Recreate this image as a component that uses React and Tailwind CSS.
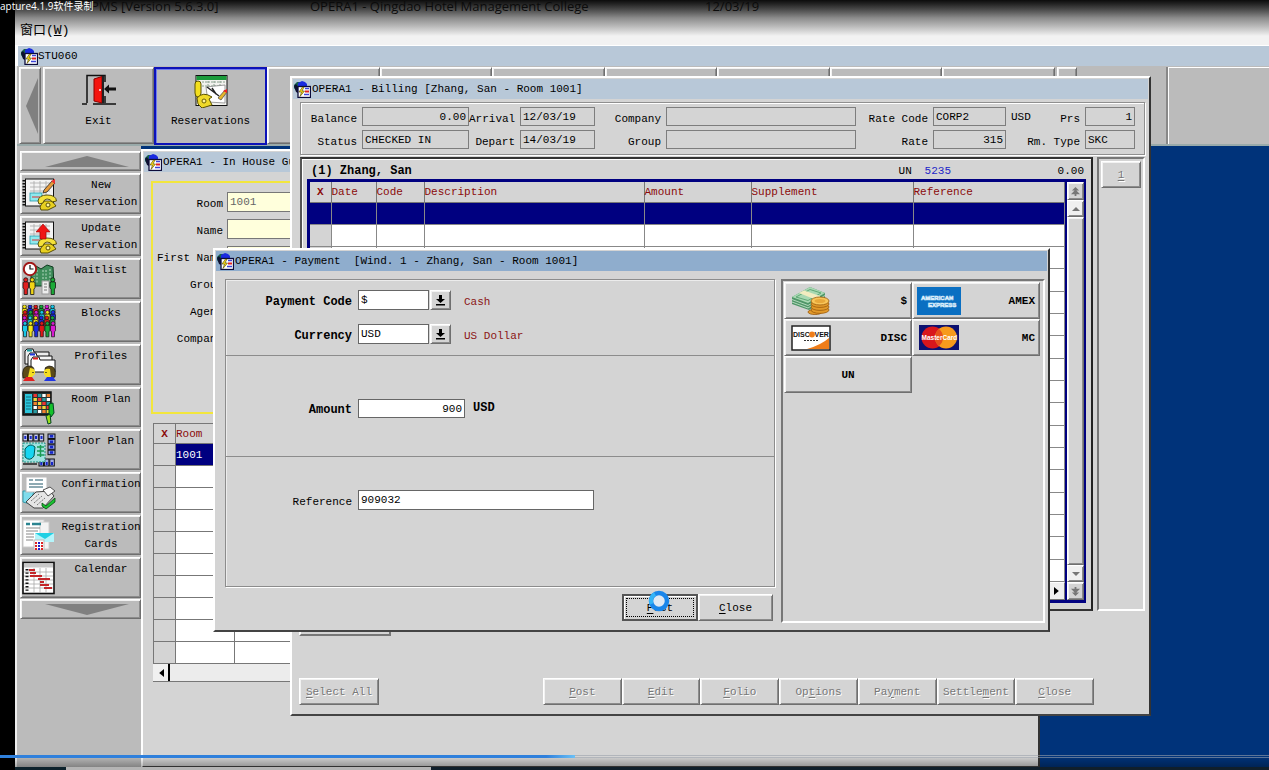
import React from "react";

const MONO = "font-['Liberation_Mono','Noto_Sans_CJK_SC',monospace]";
const RAISED = "border border-t-white border-l-white border-r-[#6f6f6f] border-b-[#6f6f6f] shadow-[inset_1px_1px_0_#f2f2f2,inset_-1px_-1px_0_#8c8c8c]";

function AppIcon() {
  return (
    <svg viewBox="0 0 17 17" className="h-[17px] w-[17px] shrink-0" aria-hidden="true">
      <path d="M0 4 L3 1 L6 1 L6 9 L3 11 L0 7Z" fill="#17604f" />
      <path d="M4 2 L8 0 L11 1 L13 3 L13 6 L4 6Z" fill="#1a2be0" />
      <path d="M0 5 L2 11 L4 12 L4 6 L2 3Z" fill="#0d1030" />
      <rect x="4" y="5.500" width="12.500" height="11" fill="#fff" stroke="#0c0b3a" strokeWidth="1.300" />
      <path d="M8.500 6 L5 11 L7.500 11 L6 15.500 L10.500 10 L8 10 L10 6Z" fill="#ffe11a" stroke="#443c00" strokeWidth=".6" />
      <path d="M11 7.500h4M10 13.500h5" stroke="#3d43d8" strokeWidth="1.600" />
      <path d="M11 10.500h4" stroke="#e02323" strokeWidth="2" />
    </svg>
  );
}

function Phone() {
  return (
    <g stroke="#4b4200" strokeWidth=".9">
      <path d="M18 30 L21 24 L30 24 L34 29 L26 33 L19 33Z" fill="#e8d020" />
      <path d="M16 24 Q17 18 25 18 Q34 18 34.500 24 L30 25 Q29 22 25 22 Q22 22 21 26 L17 27Z" fill="#f4e13a" />
      <circle cx="26" cy="28" r="2" fill="#fff6a0" />
    </g>
  );
}

function Notebook({ children }) {
  return (
    <>
      <rect x="3.500" y="2" width="28" height="27" fill="#f4f4f4" stroke="#111" />
      <path d="M2 3v26" stroke="#111" strokeWidth="3" strokeDasharray="1.500 1.500" />
      <path d="M8 6h20M8 10h20M8 14h20M12 4v14M18 4v14M24 4v14" stroke="#aaa" strokeWidth=".8" />
      <rect x="8" y="16" width="12" height="8" fill="#8fe9ee" stroke="#29a" strokeWidth=".8" />
      <path d="M10 20h8" stroke="#d33" />
      <Phone />
      {children}
    </>
  );
}

function Person({ x, y, c, s = 1 }) {
  return (
    <g transform={`translate(${x} ${y}) scale(${s})`} fill={c} stroke="#111" strokeWidth=".7">
      <path d="M0 4 Q2.500 2 5 4 L5 9 L4 10 L4 15 L1 15 L1 10 L0 9Z" />
      <circle cx="2.500" cy="1.700" r="1.900" />
    </g>
  );
}

const CROWD = ["#19c8e8", "#f2e418", "#1a2ae0", "#e01818", "#17a53a", "#d61bd0"];

const ICONS = {
  new: (
    <Notebook>
      <path d="M22 13 L30 4 L33 6 L25 15 L21 16Z" fill="#e59a3a" stroke="#222" strokeWidth=".8" />
      <path d="M29 4 L33 2 L33 7Z" fill="#e33" />
    </Notebook>
  ),
  update: (
    <Notebook>
      <path d="M21 4 L28 12 L24 12 L24 19 L18 19 L18 12 L14 12Z" fill="#f01414" stroke="#900" strokeWidth=".6" />
    </Notebook>
  ),
  waitlist: (
    <>
      <path d="M9 8 L14 4 L19 7 L25 3 L31 5 L32 24 L9 24Z" fill="#3f8d5b" stroke="#0d3a1e" />
      <path d="M12 8v14M15 8v14M21 8v14M24 8v14M28 7v14" stroke="#b9dbc4" strokeDasharray="2 1.500" />
      <circle cx="8" cy="7" r="6.200" fill="#fff" stroke="#a01616" strokeWidth="2" />
      <path d="M8 3v4h3.500" stroke="#111" fill="none" strokeWidth="1.200" />
      <Person x={1} y={16} c="#e01f1f" s={1.1} />
      <Person x={7.5} y={16} c="#f0d516" s={1.1} />
      <rect x="20" y="19" width="7" height="13" fill="#eee" stroke="#999" />
      <path d="M22 22h3M22 25h3M22 28h3" stroke="#777" />
      <Person x={28} y={16} c="#1cab38" s={1.1} />
    </>
  ),
  blocks: (
    <>
      {[0, 1, 2, 3].map((r) =>
        CROWD.map((_, i) => (
          <Person key={`${r}-${i}`} x={i * 5.6 + (r % 2 ? 0.5 : 0)} y={r * 5.6} c={CROWD[(i + r * 2 + (r === 3 ? 0 : 1)) % 6]} />
        ))
      )}
    </>
  ),
  profiles: (
    <>
      <path d="M3 3 L5 1 L11 1 L12 4 L27 4 L27 16 L3 16Z" fill="#eee" stroke="#111" />
      <path d="M6 8 L8 5 L14 5 L15 8 L30 8 L30 20 L6 20Z" fill="#f6f6f6" stroke="#111" />
      <path d="M9 12 L11 9 L17 9 L18 12 L33 12 L33 24 L9 24Z" fill="#fff" stroke="#111" />
      <path d="M5 2.500h5" stroke="#179ba0" strokeWidth="2" />
      <path d="M8 6.500h5" stroke="#2338e0" strokeWidth="2" />
      <path d="M11 10.500h5" stroke="#e02020" strokeWidth="2" />
      <path d="M1 30 Q-1 18 7 18 Q12 18 12 22 L8 30Z" fill="#5b4a18" stroke="#111" strokeWidth=".7" />
      <path d="M8 20 Q14 20 13 26 L10 29 L6 29Z" fill="#f6de22" />
      <path d="M33 29 Q35 18 27 18 Q22 19 23 22 L28 30Z" fill="#5b4a18" stroke="#111" strokeWidth=".7" />
      <path d="M28 21 Q21 20 22 26 L24 29 L29 29Z" fill="#f6de22" />
      <path d="M11 24v1M24 24v1" stroke="#111" strokeWidth="1.200" />
      <path d="M1 33 L13 33 L10 29 L4 29Z" fill="#e12121" />
      <path d="M22 33 L34 33 L31 29 L25 29Z" fill="#2136e2" />
    </>
  ),
  roomplan: (
    <>
      <rect x="1" y="1" width="28" height="23" fill="#233" stroke="#111" strokeWidth="1.500" />
      <rect x="3" y="3" width="7" height="19" fill="#2cc6dc" />
      <path d="M4 6h5M4 9h5M4 12h5M4 15h5M4 18h5" stroke="#156" strokeWidth=".8" />
      {[0, 1, 2, 3, 4].map((r) =>
        [0, 1, 2, 3].map((c) => (
          <rect key={`${r}-${c}`} x={11.5 + c * 4.4} y={3 + r * 4} width="3.400" height="3" fill={["#e33", "#fff", "#f0d93a", "#2a9aa0", "#f08030"][(r * 2 + c * 3) % 5]} />
        ))
      )}
      <path d="M27 13 L31 12 L32 22 L29 26 L27 24Z" fill="#14c22c" stroke="#042" />
      <path d="M24 25 L28 23 L29 32 L26 33Z" fill="#9be01c" stroke="#042" />
    </>
  ),
  floorplan: (
    <>
      {[0, 1, 2, 3].map((i) => <rect key={i} x={1 + i * 5.4} y="1" width="4.500" height="7" fill="#c5cbea" stroke="#111" />)}
      {[0, 1, 2, 3].map((i) => <rect key={i} x="26" y={1 + i * 5.4} width="7" height="4.500" fill="#8d9be6" stroke="#111" />)}
      {[0, 1, 2].map((i) => <rect key={i} x={17 + i * 5.4} y="26" width="4.500" height="7" fill="#a5aeea" stroke="#111" />)}
      <path d="M3.300 3v3M8.700 3v3M14 3v3M19.500 3v3" stroke="#1626c8" strokeWidth="2" />
      <path d="M29.500 2v20" stroke="#1626c8" strokeWidth="3" strokeDasharray="2.500 2.900" />
      <path d="M19.300 29v3M24.700 29v3M30 29v3" stroke="#1626c8" strokeWidth="2" />
      <rect x="1" y="10" width="22" height="19" fill="#9fe2e0" stroke="#1f8f80" strokeDasharray="2 1" />
      <path d="M3 16 Q8 9 13 14 L12 23 Q8 29 3 24Z" fill="#18d5f0" stroke="#055" />
      <path d="M15 14h7M15 18h7M15 22h7M18.500 12v12" stroke="#1a9a55" strokeWidth="1.500" />
      <path d="M1 31h14" stroke="#222" strokeWidth="1.500" />
    </>
  ),
  confirmation: (
    <>
      <path d="M1 15 L12 15 L8 28 L1 26Z" fill="#7fdcec" stroke="#39a" />
      <rect x="4" y="1" width="21" height="15" fill="#fff" stroke="#bbb" />
      <path d="M7 4h4M13 4h8M7 8h14M7 11h14" stroke="#6a8f9a" strokeWidth="1.400" />
      <path d="M4 26 L14 16 L28 15 L32 20 L21 32 L12 32Z" fill="#e6e6e6" stroke="#444" />
      <path d="M21 14 L28 11 L33 15 L26 20Z" fill="#fafafa" stroke="#555" />
      <path d="M9 25l8-7M12 27l8-7M15 29l8-7" stroke="#777" strokeDasharray="2 1" />
      <path d="M20 27 L24 30 L33 22 L33 26 L24 33 L20 30Z" fill="#19c431" stroke="#064d10" strokeWidth=".8" />
    </>
  ),
  registration: (
    <>
      <rect x="1" y="1" width="21" height="27" fill="#fff" stroke="#ccc" />
      <rect x="18" y="3" width="9" height="27" fill="#f3f3f3" stroke="#ccc" />
      <path d="M4 5h4M10 5h9" stroke="#2b8490" strokeWidth="2.400" />
      <path d="M4 9h14M4 12h12M4 15h8M4 18h8M4 21h7" stroke="#888" strokeWidth="1.200" />
      <path d="M13 14 L32 14 L32 23 L13 23Z" fill="#b5f4fa" />
      <path d="M13 14 L32 14 L23 20Z" fill="#1fd0e4" />
      <rect x="12" y="21" width="10" height="10" fill="#fff" stroke="#bbb" />
      <path d="M14 23v8M20 23v8" stroke="#d22" strokeWidth="2" strokeDasharray="2 1" />
      <path d="M17 23v8" stroke="#22c" strokeWidth="2" strokeDasharray="2 1" />
    </>
  ),
  calendar: (
    <>
      <rect x="1" y="1.500" width="31" height="31" fill="#fff" stroke="#111" strokeWidth="1.600" />
      <rect x="2" y="2.500" width="29" height="4" fill="#c9c9c9" />
      <path d="M2 11h29M2 15h29M2 19h29M2 23h29M2 27h29M12 7v25M18 7v25M24 7v25" stroke="#aaa" strokeWidth=".8" />
      <path d="M5 8v22" stroke="#111" strokeWidth="3" strokeDasharray="1.400 2" />
      <path d="M7 9h6M8 12h6M8 15h12M16 18h12M18 21h4M18 24h9M22 27h8" stroke="#c3262a" strokeWidth="2" />
    </>
  ),
};

const NAV = [
  ["new", "New", "Reservation"],
  ["update", "Update", "Reservation"],
  ["waitlist", "Waitlist"],
  ["blocks", "Blocks"],
  ["profiles", "Profiles"],
  ["roomplan", "Room Plan"],
  ["floorplan", "Floor Plan"],
  ["confirmation", "Confirmation"],
  ["registration", "Registration", "Cards"],
  ["calendar", "Calendar"],
];

function ExitIcon() {
  return (
    <svg viewBox="0 0 34 32" className="h-8 w-[34px]" aria-hidden="true">
      <path d="M5 29 V1.500 H23 V8 M23 22 V29" fill="none" stroke="#111" strokeWidth="1.500" />
      <path d="M0 30h5M11 30h23" stroke="#111" strokeWidth="1.500" />
      <path d="M12 5 L20 2.500 L20 29 L12 27Z" fill="#f4150f" stroke="#8a0000" />
      <path d="M20 2h2v27h-2z" fill="#222" />
      <circle cx="18" cy="16" r="1" fill="#fff" />
      <path d="M22 15 L27 10.500 L27 13.500 L34 13.500 L34 16.500 L27 16.500 L27 19.500Z" fill="#111" />
    </svg>
  );
}

function ReservationsIcon() {
  return (
    <svg viewBox="0 0 34 34" className="h-[34px] w-[34px]" aria-hidden="true">
      <rect x="2" y="1.500" width="31" height="30" fill="#f2f2ee" stroke="#111" />
      <rect x="2.500" y="2" width="30" height="4" fill="#1b9a3b" />
      <path d="M8 8h24M8 12h24M8 24h24M14 7v6M20 7v6M26 7v6" stroke="#8aa08e" strokeDasharray="2 1" />
      <path d="M12 13 L31 11 L31 29 L14 28Z" fill="#fff" stroke="#777" strokeWidth=".7" />
      <path d="M13 13 L25 22 M18 14 L22 20" fill="none" stroke="#222" strokeWidth="1.400" />
      <path d="M1 10 Q1 7 4 7 Q7 7 7 10 L7 19 Q7 23 4 23 Q1 23 1 19Z" fill="#f4df1e" stroke="#5b5200" />
      <path d="M3 24 Q9 17 18 23 L15 25 L18 31 L8 34 L4 30Z" fill="#efd92a" stroke="#5b5200" />
      <circle cx="10" cy="27" r="2" fill="#fff49a" stroke="#6d6000" />
      <path d="M24 24 L31 16 L33 18 L27 26Z" fill="#e6b62b" stroke="#444" strokeWidth=".7" />
      <path d="M29 17 L33 15 L33 19Z" fill="#e22" />
    </svg>
  );
}

function Arrow({ d, className, viewBox = "0 0 10 10" }) {
  return (
    <svg viewBox={viewBox} className={className} fill="currentColor" preserveAspectRatio="none" aria-hidden="true">
      <path d={d} />
    </svg>
  );
}

function Mnemonic({ text, at = 0 }) {
  return (
    <span className="whitespace-pre">
      {text.slice(0, at)}
      <u className="underline underline-offset-2">{text[at]}</u>
      {text.slice(at + 1)}
    </span>
  );
}

function WinButton({ text, at, disabled, className = "" }) {
  return (
    <button
      type="button"
      disabled={disabled}
      className={`flex h-[27px] items-center justify-center bg-[#d4d4d4] text-[11px] ${RAISED} ${disabled ? "text-[#777] [text-shadow:1px_1px_0_#fff]" : "text-black"} ${className}`}
    >
      <Mnemonic text={text} at={at} />
    </button>
  );
}

function Window({ title, active, className, children }) {
  return (
    <section
      aria-label={title}
      className={`absolute flex flex-col overflow-hidden border-2 border-t-white border-l-white border-r-[#333] border-b-[#444] bg-[#d4d4d4] ${className}`}
    >
      <header className={`mx-px mt-px flex h-5 shrink-0 items-center gap-px px-px ${active ? "bg-[#8fadcd]" : "bg-[#b8c8d8]"}`}>
        <AppIcon />
        <h2 className="whitespace-pre text-[11px]">{title}</h2>
      </header>
      {children}
    </section>
  );
}

function Field({ id, label, value, labelClass, inputClass }) {
  return (
    <div className="flex h-[19px] items-center">
      <label htmlFor={id} className={`shrink-0 pt-1 pr-[5px] text-right whitespace-pre ${labelClass}`}>{label}</label>
      <input id={id} readOnly defaultValue={value} className={`h-[19px] shrink-0 border border-[#7d7d7d] bg-[#d4d4d4] px-[2px] outline-none ${inputClass}`} />
    </div>
  );
}

function InHouseWindow() {
  const fields = [["Room", "1001"], ["Name", ""], ["First Name", ""], ["Group", ""], ["Agent", ""], ["Company", ""]];
  return (
    <Window title="OPERA1 - In House Gu" className="top-[149px] bottom-[2px] left-[141px] w-[899px]">
      <div className="mx-2 mt-[9px] h-[233px] shrink-0 border-2 border-[#f2e63c] pt-[9px]">
        {fields.map(([label, value]) => (
          <div key={label} className="flex h-[27px] items-start">
            <label htmlFor={`guest-${label}`} className="w-[70px] shrink-0 pt-[5px] text-right whitespace-pre">{label}</label>
            <input id={`guest-${label}`} readOnly defaultValue={value} className="ml-1 h-5 w-48 border border-[#777] bg-[#ffffdc] px-[2px] text-[#666] outline-none" />
          </div>
        ))}
      </div>
      <div className="px-[10px] pt-[9px]">
        <table className="w-full table-fixed border-collapse bg-white">
          <colgroup><col className="w-[22px]" /><col className="w-[59px]" /><col /></colgroup>
          <thead>
            <tr className="h-5 bg-[#d4d4d4] text-left text-[#8b0a0a]">
              <th className="border border-[#777] p-0 text-center font-bold">X</th>
              <th className="border border-r-0 border-[#777] p-0 font-normal">Room</th>
              <th className="border border-l-0 border-[#777] p-0"></th>
            </tr>
          </thead>
          <tbody>
            {Array.from({ length: 10 }, (_, i) => (
              <tr key={i} className="h-[22px]">
                <td className="border border-[#777] bg-[#d4d4d4] p-0"></td>
                <td className={`border border-[#777] p-0 ${i === 0 ? "bg-[#000080] text-white" : ""}`}>{i === 0 ? "1001" : ""}</td>
                <td className="border border-[#777] p-0"></td>
              </tr>
            ))}
          </tbody>
        </table>
      </div>
      <div className="mx-[10px] flex h-[18px] shrink-0 border-b border-[#777] bg-[#ececec]">
        <button type="button" aria-label="Scroll left" className="flex w-[17px] items-center justify-center border-r-2 border-black bg-[#f0f0f0]">
          <Arrow d="M10 0 L2 5 L10 10Z" className="h-2 w-[6px]" />
        </button>
      </div>
    </Window>
  );
}

const LEDGER = ["Date", "Code", "Description", "Amount", "Supplement", "Reference"];
const ACTIONS = [["Post", 0], ["Edit", 0], ["Folio", 0], ["Options", 2], ["Payment", 2], ["Settlement", 6], ["Close", 0]];

function BillingWindow() {
  return (
    <Window title="OPERA1 - Billing [Zhang, San - Room 1001]" className="top-[76px] left-[290px] h-[640px] w-[861px]">
      <div className="mr-1 ml-2 mt-[3px] flex h-[53px] shrink-0 flex-col gap-1 border border-[#8f8f8f] pt-[4px] pr-[9px] pl-px shadow-[inset_1px_1px_0_#fff,1px_1px_0_#fff]">
        <div className="flex items-center">
          <Field id="balance" label="Balance" value="0.00" labelClass="w-[60px]" inputClass="w-[107px] text-right" />
          <Field id="arrival" label="Arrival" value="12/03/19" labelClass="w-[51px]" inputClass="w-[75px]" />
          <Field id="company" label="Company" value="" labelClass="w-[71px]" inputClass="w-[190px]" />
          <Field id="rate-code" label="Rate Code" value="CORP2" labelClass="w-[77px]" inputClass="w-[73px]" />
          <span className="pl-[5px]">USD</span>
          <div className="flex-1" />
          <Field id="prs" label="Prs" value="1" labelClass="w-[30px]" inputClass="w-[50px] text-right" />
        </div>
        <div className="flex items-center">
          <Field id="status" label="Status" value="CHECKED IN" labelClass="w-[60px]" inputClass="w-[107px]" />
          <Field id="depart" label="Depart" value="14/03/19" labelClass="w-[51px]" inputClass="w-[75px]" />
          <Field id="group" label="Group" value="" labelClass="w-[71px]" inputClass="w-[190px]" />
          <Field id="rate" label="Rate" value="315" labelClass="w-[77px]" inputClass="w-[73px] text-right" />
          <div className="flex-1" />
          <Field id="rm-type" label="Rm. Type" value="SKC" labelClass="w-[60px]" inputClass="w-[50px]" />
        </div>
      </div>

      <div className="mr-1 ml-2 mt-[2px] flex h-[454px] shrink-0 gap-1">
        <div className="flex min-w-0 flex-1 flex-col border-2 border-t-[#333] border-r-[#222] border-b-[#333] border-l-[#555] px-[5px] pb-[6px] shadow-[inset_1px_1px_0_#fff]">
          <div className="flex h-5 shrink-0 items-center pt-1 pr-[2px] pl-1">
            <h3 className="flex-1 text-[12px] font-bold whitespace-pre">(1) Zhang, San</h3>
            <span className="w-[26px]">UN</span>
            <span className="w-[133px] text-[#1e26c8]">5235</span>
            <span>0.00</span>
          </div>
          <div className="flex min-h-0 flex-1 border-[3px] border-r-2 border-[#000080]">
            <div className="flex min-w-0 flex-1 flex-col">
              <table className="h-[400px] w-full table-fixed border-collapse bg-white">
                <colgroup>
                  <col className="w-[21px]" /><col className="w-[45px]" /><col className="w-[48px]" /><col className="w-[220px]" /><col className="w-[107px]" /><col className="w-[162px]" /><col />
                </colgroup>
                <thead>
                  <tr className="h-5 bg-[#d4d4d4] text-left text-[#8b0a0a]">
                    <th className="border-r border-b border-[#777] p-0 text-center font-bold">X</th>
                    {LEDGER.map((h) => <th key={h} className="border-r border-b border-[#777] p-0 font-normal">{h}</th>)}
                  </tr>
                </thead>
                <tbody>
                  {Array.from({ length: 17 }, (_, i) => (
                    <tr key={i} className={i === 0 ? "bg-[#000080]" : ""}>
                      <td className={`border-r border-b border-[#888] p-0 ${i === 0 ? "" : "bg-[#d4d4d4]"}`}></td>
                      {LEDGER.map((h) => <td key={h} className="border-r border-b border-[#888] p-0"></td>)}
                    </tr>
                  ))}
                </tbody>
              </table>
              <div className="flex flex-1 justify-end bg-[#ececec]">
                <button type="button" aria-label="Scroll right" className="flex w-4 items-center justify-center border border-white border-r-[#777] border-b-[#777] bg-[#f0f0f0]">
                  <Arrow d="M0 0 L8 5 L0 10Z" className="h-2 w-[6px]" />
                </button>
              </div>
            </div>
            <div className="flex w-[19px] shrink-0 flex-col border-l-2 border-[#000080] text-[#777]">
              <button type="button" aria-label="First page" className={`flex h-[18px] items-center justify-center bg-[#d4d4d4] ${RAISED}`}>
                <Arrow d="M5 0 L9 4 L6 4 L10 8 L6 8 L6 10 L4 10 L4 8 L0 8 L4 4 L1 4Z" className="h-[9px] w-[9px]" />
              </button>
              <button type="button" aria-label="Scroll up" className={`flex h-[17px] items-center justify-center bg-[#f0f0f0] ${RAISED}`}>
                <Arrow d="M5 0 L10 10 L0 10Z" className="h-1 w-2" />
              </button>
              <div className={`flex-1 bg-[#d4d4d4] ${RAISED}`} />
              <button type="button" aria-label="Scroll down" className={`flex h-[17px] items-center justify-center bg-[#f0f0f0] ${RAISED}`}>
                <Arrow d="M0 0 L10 0 L5 10Z" className="h-1 w-2" />
              </button>
              <button type="button" aria-label="Last page" className={`flex h-[18px] items-center justify-center bg-[#d4d4d4] ${RAISED}`}>
                <Arrow d="M5 10 L9 6 L6 6 L10 2 L6 2 L6 0 L4 0 L4 2 L0 2 L4 6 L1 6Z" className="h-[9px] w-[9px]" />
              </button>
            </div>
          </div>
        </div>
        <div className="w-12 shrink-0 border-2 border-t-[#777] border-r-white border-b-white border-l-[#777] p-[2px]">
          <WinButton text="1" at={0} disabled className="w-full" />
        </div>
      </div>

      <div className="mx-[7px] h-[25px] w-[92px] shrink-0 border-2 border-t-white border-r-[#777] border-b-[#777] border-l-white" />
      <div className="mx-[7px] mt-auto mb-[9px] flex justify-between pr-[48px]">
        <WinButton text="Select All" at={0} disabled className="w-20" />
        <div className="grid w-[551px] grid-cols-7">
          {ACTIONS.map(([t, at]) => <WinButton key={t} text={t} at={at} disabled />)}
        </div>
      </div>
    </Window>
  );
}

function CashIcon() {
  return (
    <svg viewBox="0 0 38 28" className="h-7 w-[38px]" aria-hidden="true">
      <path d="M0 10 L18 0 L33 6 L33 13 L17 23 L0 17Z" fill="#4f9668" />
      <path d="M0 10 L18 0 L33 6 L16 16Z" fill="#a8d8b2" />
      <path d="M4 10 L18 2.500 L29 6 L16 13.500Z" fill="none" stroke="#5fa876" />
      <path d="M0 12.500 L16 18.500 L33 8.500M0 15 L16 21 L30 12" fill="none" stroke="#cbe9d0" strokeWidth=".8" />
      <path d="M7 6 L12 3.500 L28 9 L28 16 L22 19 L22 12Z" fill="#f2ecc0" />
      <g fill="#e29a2a" stroke="#9a5a0c" strokeWidth=".8">
        <ellipse cx="23" cy="25" rx="7" ry="2.600" />
        <ellipse cx="28" cy="23" rx="9" ry="3.400" />
        <ellipse cx="28" cy="20" rx="9" ry="3.400" />
        <ellipse cx="28" cy="17" rx="9" ry="3.400" />
        <ellipse cx="28" cy="14" rx="9" ry="4" fill="#f8c65a" />
      </g>
      <ellipse cx="28" cy="14" rx="5.500" ry="2" fill="#e8a83a" />
    </svg>
  );
}

function AmexIcon() {
  return (
    <svg viewBox="0 0 44 28" className="h-7 w-11" aria-hidden="true">
      <rect width="44" height="28" fill="#0a6fc2" />
      <g fill="#0a6fc2" stroke="#d8ecfa" strokeWidth=".7" fontFamily="Liberation Sans, sans-serif" fontWeight="bold" fontSize="6">
        <text x="4" y="13">AMERICAN</text>
        <text x="11" y="20">EXPRESS</text>
      </g>
    </svg>
  );
}

function DiscoverIcon() {
  return (
    <svg viewBox="0 0 40 26" className="h-[26px] w-10" aria-hidden="true">
      <rect x="1" y="1" width="38" height="24" fill="#fff" stroke="#222" strokeWidth="1.500" />
      <path d="M38 13 Q30 20 16 24 L38 24Z" fill="#ee7d1a" />
      <g fill="#111" fontFamily="Liberation Sans, sans-serif" fontWeight="bold" fontSize="7">
        <text x="2" y="12">DISC</text>
        <text x="23.500" y="12">VER</text>
      </g>
      <circle cx="21" cy="9.500" r="2.900" fill="#ee7d1a" />
      <path d="M13 15.500h14" stroke="#333" strokeWidth="1.200" strokeDasharray="2 1" />
    </svg>
  );
}

function MastercardIcon() {
  return (
    <svg viewBox="0 0 40 25" className="h-[25px] w-10" aria-hidden="true">
      <rect width="40" height="25" fill="#0d1170" />
      <circle cx="13.500" cy="12.500" r="11" fill="#d8161c" />
      <circle cx="27" cy="12.500" r="11" fill="#f79a1c" />
      <path d="M20 4 A11 11 0 0 0 20 21 A11 11 0 0 0 20 4" fill="#e5501c" />
      <text x="2.500" y="15" fill="#fff" fontFamily="Liberation Sans, sans-serif" fontWeight="bold" fontSize="6.500">MasterCard</text>
    </svg>
  );
}

const METHODS = [["$", CashIcon], ["AMEX", AmexIcon], ["DISC", DiscoverIcon], ["MC", MastercardIcon], ["UN", null]];

function Lookup({ id, label, value, note }) {
  return (
    <div className="flex h-5 items-center">
      <label htmlFor={id} className="w-[126px] pt-1 text-right text-[12px] font-bold whitespace-pre">{label}</label>
      <input id={id} defaultValue={value} className="ml-[6px] h-5 w-[71px] border border-[#666] bg-white px-[2px] outline-none" />
      <button type="button" aria-label={`${label} list`} className={`ml-px flex h-5 w-[21px] items-center justify-center bg-[#d4d4d4] ${RAISED}`}>
        <Arrow d="M3 0 H6 V4 H9 L4.500 8 L0 4 H3Z M0 9 H9 V10.500 H0Z" viewBox="0 0 9 11" className="h-[11px] w-[9px]" />
      </button>
      <span className="ml-[13px] pt-1 text-[#8b1414]">{note}</span>
    </div>
  );
}

function PaymentWindow() {
  return (
    <Window active title="OPERA1 - Payment  [Wind. 1 - Zhang, San - Room 1001]" className="top-[248px] left-[213px] h-[384px] w-[837px]">
      <div className="flex min-h-0 flex-1 gap-[6px] px-[3px] pt-2 pb-[7px]">
        <div className="flex flex-1 flex-col pl-[7px]">
          <div className="flex h-[308px] shrink-0 flex-col border border-[#8c8c8c] shadow-[1px_1px_0_#fff,inset_1px_1px_0_#ececec]">
            <div className="flex h-[76px] flex-col gap-[14px] border-b border-[#8c8c8c] pt-[10px]">
              <Lookup id="pay-code" label="Payment Code" value="$" note="Cash" />
              <Lookup id="pay-currency" label="Currency" value="USD" note="US Dollar" />
            </div>
            <div className="flex h-[101px] items-start border-b border-[#8c8c8c] pt-[43px]">
              <label htmlFor="pay-amount" className="w-[126px] pt-1 text-right text-[12px] font-bold">Amount</label>
              <input id="pay-amount" defaultValue="900" className="ml-[6px] h-[19px] w-[107px] border border-[#666] bg-white px-[2px] text-right outline-none" />
              <span className="ml-2 text-[12px] leading-[19px] font-bold">USD</span>
            </div>
            <div className="flex items-start pt-[33px]">
              <label htmlFor="pay-ref" className="w-[126px] pt-[5px] text-right">Reference</label>
              <input id="pay-ref" defaultValue="909032" className="ml-[6px] h-5 w-[236px] border border-[#666] bg-white px-[2px] outline-none" />
            </div>
          </div>
          <div className="mt-[7px] flex justify-end pr-[2px]">
            <div className="relative">
              <button type="button" className="h-[27px] w-[76px] border-2 border-[#555] bg-[#d4d4d4] p-[2px] text-[11px] shadow-[inset_1px_1px_0_#fff]">
                <span className="flex h-full items-center justify-center border border-dotted border-black"><Mnemonic text="Post" at={0} /></span>
              </button>
              <svg viewBox="0 0 22 22" className="pointer-events-none absolute -top-1 left-[26px] h-[22px] w-[22px]" aria-hidden="true">
                <circle cx="11" cy="11" r="8" fill="#dfe8f2" stroke="#1a86ea" strokeWidth="4.500" />
                <path d="M3.500 14 A8 8 0 0 1 7 4" fill="none" stroke="#35b4f7" strokeWidth="4" />
              </svg>
            </div>
            <WinButton text="Close" at={0} className="w-[75px]" />
          </div>
        </div>
        <div className="grid w-[264px] shrink-0 auto-rows-[37px] grid-cols-2 content-start border-2 border-t-[#777] border-r-white border-b-white border-l-[#777] py-px pr-[3px] pl-px">
          {METHODS.map(([name, Icon]) => (
            <button key={name} type="button" className={`flex items-center bg-[#d4d4d4] px-1 text-[11px] font-bold ${RAISED} ${Icon ? "justify-between" : "justify-center"}`}>
              {Icon && <span className="flex w-[44px] justify-center"><Icon /></span>}
              <span>{name}</span>
            </button>
          ))}
        </div>
      </div>
    </Window>
  );
}

function TopToolbar() {
  return (
    <nav aria-label="Modules" className="flex h-20 shrink-0 border-b-2 border-[#9aa] bg-[#bbb] pt-px pl-[2px]">
      <button type="button" aria-label="Previous modules" className={`mr-[2px] flex h-[77px] w-[22px] shrink-0 items-center justify-end pr-[2px] text-[#808080] ${RAISED}`}>
        <Arrow d="M10 0 L0 5 L10 10Z" className="h-[56px] w-[12px]" />
      </button>
      <button type="button" className={`flex h-[77px] w-[111px] shrink-0 flex-col items-center pt-[6px] ${RAISED}`}>
        <ExitIcon />
        <span className="mt-2 text-[11px]">Exit</span>
      </button>
      <button type="button" className="flex h-[78px] w-[113px] shrink-0 flex-col items-center border-2 border-[#0c12b8] pt-[5px] shadow-[inset_1px_1px_0_#6f7cf0]">
        <ReservationsIcon />
        <span className="mt-[6px] text-[11px]">Reservations</span>
      </button>
      <div className="grid w-[788px] shrink-0 grid-cols-7">
        {[1, 2, 3, 4, 5, 6, 7].map((n) => <span key={n} className={`h-[77px] ${RAISED}`} />)}
      </div>
      <span className={`ml-[2px] h-[77px] w-5 shrink-0 ${RAISED}`} />
      <span className="h-[77px] w-[91px] shrink-0 border-r-2 border-r-[#888]" />
      <span className="h-[77px] flex-1 border-t border-l border-white" />
    </nav>
  );
}

function Sidebar() {
  return (
    <nav aria-label="Reservations" className="w-[124px] shrink-0 overflow-hidden bg-[#bbb] pt-[5px] pl-[3px]">
      <button type="button" aria-label="Scroll menu up" className={`flex h-5 w-full items-center justify-center pl-3 text-[#808080] ${RAISED}`}>
        <Arrow d="M5 0 L10 10 L0 10Z" className="h-[11px] w-[84px]" />
      </button>
      <div className="mt-[2px] grid h-[425px] grid-rows-10 gap-[2px]">
        {NAV.map(([icon, ...lines]) => (
          <button key={icon} type="button" className={`flex items-start overflow-hidden ${RAISED}`}>
            <svg viewBox="0 0 35 34" className="mt-[3px] ml-px h-[34px] w-[35px] shrink-0" aria-hidden="true">{ICONS[icon]}</svg>
            <span className="flex w-[88px] shrink-0 flex-col items-center pt-[3px] text-[11px] leading-[17px]">
              {lines.map((l) => <span key={l} className="whitespace-nowrap">{l}</span>)}
            </span>
          </button>
        ))}
      </div>
      <button type="button" aria-label="Scroll menu down" className={`mt-px flex h-5 w-full items-center justify-center pl-3 text-[#808080] ${RAISED}`}>
        <Arrow d="M0 0 L10 0 L5 10Z" className="h-[11px] w-[84px]" />
      </button>
    </nav>
  );
}

export default function App() {
  const played = 45.3;
  return (
    <div className={`relative flex h-screen overflow-hidden bg-black pl-[15px] text-[11px] leading-[14px] text-black ${MONO}`}>
      <div className="flex min-w-0 flex-1 flex-col bg-[#00337a]">
        <header className="h-[45px] shrink-0 bg-linear-to-b from-[#0c0c0c] via-[#8c8c8c] via-40% to-[#f2f2f2] to-80%">
          <div className="flex h-3 items-center font-['Open_Sans',sans-serif] text-[13px] leading-3 whitespace-pre text-[#0b0b0b]">
            <span className="w-[295px] pl-[76px]">PMS [Version 5.6.3.0]</span>
            <span className="w-[395px]">OPERA1 - Qingdao Hotel Management College</span>
            <span>12/03/19</span>
          </div>
          <button type="button" className="mt-[10px] ml-[5px] text-[13px] leading-[18px]">窗口(<u>W</u>)</button>
        </header>
        <div className="flex h-[21px] shrink-0 items-center border-t border-l-[3px] border-white bg-[#b8c8d8] pl-[3px]">
          <AppIcon />
          <h1 className="text-[11px]">STU060</h1>
        </div>
        <div className="flex min-h-0 flex-1 flex-col border-l-2 border-[#eee]">
          <TopToolbar />
          <div className="flex min-h-0 flex-1"><Sidebar /></div>
        </div>
      </div>

      <InHouseWindow />
      <BillingWindow />
      <PaymentWindow />

      <div className="pointer-events-none absolute top-0 left-0 font-['Open_Sans','Noto_Sans_CJK_SC',sans-serif] text-[10px] leading-[13px] whitespace-nowrap text-white">
        apture4.1.9软件录制
      </div>
      <div className="pointer-events-none absolute inset-x-0 bottom-0">
        <div role="progressbar" aria-label="Playback" aria-valuenow={played} className="h-[3px] border-y border-[#9aa0aa]/60">
          <div className="-mt-px h-[3px] bg-linear-to-r from-[#2f80dc] from-95% to-[#6cc0f5]" style={{ width: `${played}%` }} />
        </div>
        <div className="h-[9px] bg-linear-to-b from-black/5 to-black/30" />
        <div className="flex h-[3px]">
          <div className="w-[15px] bg-black" />
          <div className="w-[51px] bg-[#0d222c]" />
          <div className="w-[365px] bg-[#b4b4b4]" />
          <div className="flex-1 bg-[#101f2b]" />
        </div>
      </div>
    </div>
  );
}
